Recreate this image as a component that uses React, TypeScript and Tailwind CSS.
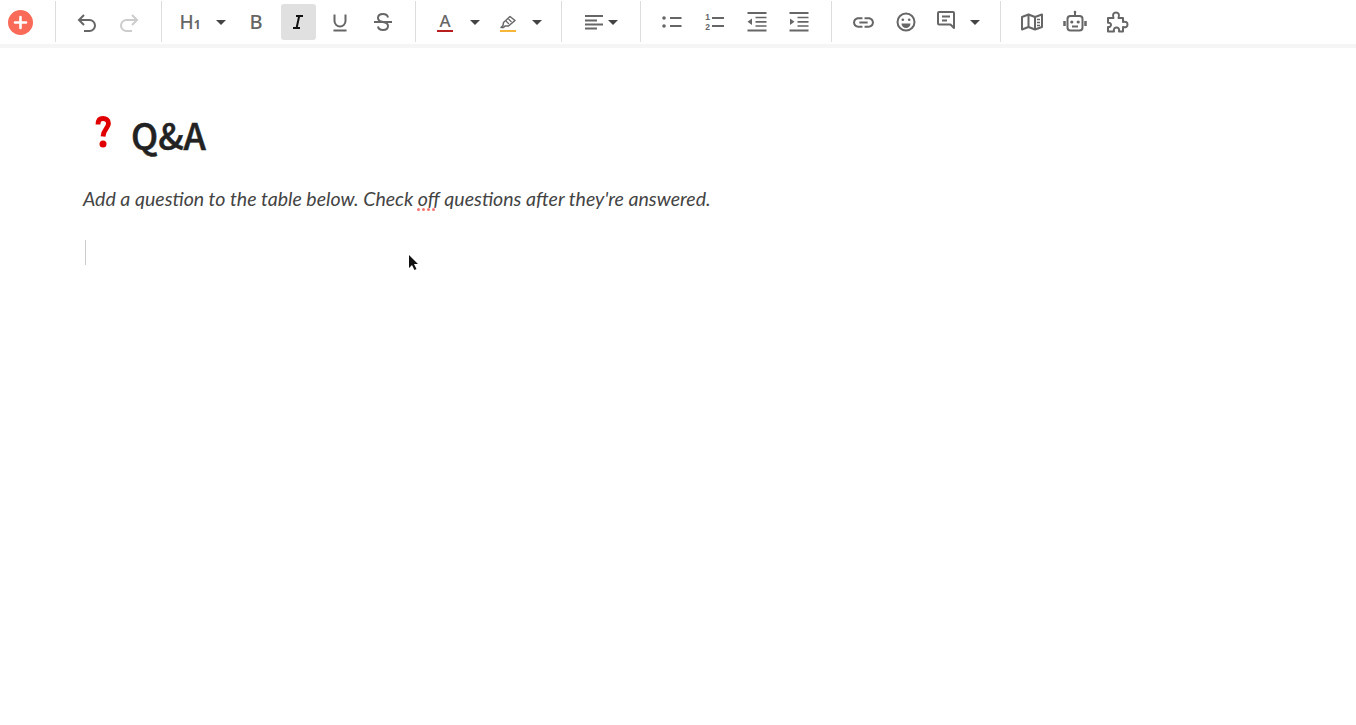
import type { ReactNode } from "react";
import { MdLink } from "react-icons/md";

function Caret({ w = "w-[20px]" }: { w?: string }) {
  return (
    <div className={`${w} h-full flex items-center justify-center shrink-0`}>
      <div className="w-0 h-0 border-x-[5px] border-x-transparent border-t-[5px] border-t-[#444]" />
    </div>
  );
}

function Btn({ children, w = "w-[42px]" }: { children: ReactNode; w?: string }) {
  return <div className={`${w} h-full flex items-center justify-center text-[#666] shrink-0`}>{children}</div>;
}

function Sep() {
  return <div className="w-px h-[41px] mt-[1px] self-start bg-[#ddd] shrink-0" />;
}

// 24px stroke icon, most of the toolbar glyphs
function Ico({ children, color = "#666", sw = 2 }: { children: ReactNode; color?: string; sw?: number }) {
  return (
    <svg width="24" height="24" viewBox="0 0 24 24" fill="none" stroke={color} strokeWidth={sw}>
      {children}
    </svg>
  );
}

export default function App() {
  return (
    <div className="w-[1356px] h-[725px] bg-white overflow-hidden relative font-['Lato',sans-serif]">
      <div className="h-[44px] flex items-center bg-white">
        <div className="w-[55px] h-full flex items-center pl-[8px]">
          <div className="w-[25px] h-[25px] rounded-full bg-[#f96b58] flex items-center justify-center">
            <svg width="15" height="15" viewBox="0 0 15 15">
              <path d="M7.5 2v11M2 7.5h11" stroke="#fff" strokeWidth="2.6" strokeLinecap="round" />
            </svg>
          </div>
        </div>
        <Sep />
        <div className="w-[105px] h-full flex items-center pl-[10px]">
          <Btn>
            <Ico>
              <path d="M9 5 4 10l5 5M4 10h10.5a5.5 5.5 0 0 1 0 11H9" />
            </Ico>
          </Btn>
          <Btn>
            <Ico color="#ccc">
              <path d="M15 5l5 5-5 5M20 10H9.5a5.5 5.5 0 0 0 0 11H15" />
            </Ico>
          </Btn>
        </div>
        <Sep />
        <div className="w-[253px] h-full flex items-center pl-[7px]">
          <Btn>
            <span className="font-['Noto_Sans',sans-serif] font-medium text-[19px] leading-none">H</span>
            <span className="font-['Noto_Sans',sans-serif] text-[12px] leading-none mt-[5px] font-bold">1</span>
          </Btn>
          <Caret />
          <div className="w-[4px]" />
          <Btn>
            <span className="font-['Noto_Sans',sans-serif] font-medium text-[20px] leading-none">B</span>
          </Btn>
          <div className="w-[42px] h-full flex items-center justify-center shrink-0">
            <div className="w-[35px] h-[36px] rounded-[3px] bg-[#e0e0e0] flex items-center justify-center">
              <svg width="12" height="14" viewBox="0 0 12 14" fill="none" stroke="#111" strokeWidth="2">
                <path d="M4 1h7M1 13h7M7.2 1 4.6 13" />
              </svg>
            </div>
          </div>
          <Btn>
            <Ico>
              <path d="M6.500 4.500v6.500a5.500 5.500 0 0 0 11 0V4.500M5.500 20.500h13" />
            </Ico>
          </Btn>
          <Btn w="w-[43px]">
            <Ico>
              <path d="M17 7.500C16.500 5 14.500 4 12 4 9 4 7 5.500 7 8c0 2.500 2 3.500 5 4 3 .5 5 1.500 5 4 0 2.500-2 4-5 4-2.500 0-4.500-1-5-3.500" />
              <path d="M3 12h18" />
            </Ico>
          </Btn>
        </div>
        <Sep />
        <div className="w-[145px] h-full flex items-center pl-[7px]">
          <Btn w="w-[44px]">
            <div className="flex flex-col items-center w-[16px] h-[20px] justify-end">
              <span className="font-['Noto_Sans',sans-serif] font-medium text-[17px] leading-[16px] text-[#666]">A</span>
              <div className="w-[16px] h-[2px] mt-[1px] bg-[#b81e1e]" />
            </div>
          </Btn>
          <Caret w="w-[16px]" />
          <Btn w="w-[50px]">
            <div className="flex flex-col items-center w-[16px] h-[20px] justify-end">
              <svg width="16" height="14" viewBox="0 0 16 14" fill="none" stroke="#666" strokeWidth="1.5" strokeLinejoin="round">
                <path d="M1 12.500 3 10.500 3.500 7.500 10 1.500 15 5.500 8.500 11H5L3.500 12.500Z" />
                <path d="M6 6l3 3M8.500 4l3 3" strokeWidth="1.200" />
              </svg>
              <div className="w-[16px] h-[2px] mt-[1px] bg-[#f5b63a]" />
            </div>
          </Btn>
          <Caret w="w-[8px]" />
        </div>
        <Sep />
        <div className="w-[78px] h-full flex items-center pl-[23px]">
          <svg width="18" height="16" viewBox="0 0 18 16" fill="none" stroke="#666" strokeWidth="2">
            <path d="M0 2h18M0 6.500h12M0 10.500h18M0 14.500h12" />
          </svg>
          <Caret w="w-[20px]" />
        </div>
        <Sep />
        <div className="w-[190px] h-full flex items-center pl-[10px]">
          <Btn>
            <Ico>
              <circle cx="4" cy="8" r="1.800" fill="#666" stroke="none" />
              <circle cx="4" cy="16" r="1.800" fill="#666" stroke="none" />
              <path d="M10 8h11.500M10 16h11.500" />
            </Ico>
          </Btn>
          <Btn>
            <div className="flex items-center gap-[2px] ml-[1px]">
              <div className="flex flex-col items-center gap-[1px] font-['Liberation_Sans',sans-serif] font-bold text-[8.5px] leading-[9px]">
                <span>1</span>
                <span>2</span>
              </div>
              <svg width="12" height="16" viewBox="0 0 12 16" fill="none" stroke="#666" strokeWidth="2">
                <path d="M0 4h12M0 12h12" />
              </svg>
            </div>
          </Btn>
          <Btn w="w-[43px]">
            <Ico>
              <path d="M2.500 3h19M2.500 20.500h19" />
              <path d="M10.500 7.500h11M10.500 11.800h11M10.500 16h11" strokeWidth="1.700" />
              <path d="M7 8.500v6.500l-4.500-3.250Z" fill="#666" stroke="none" />
            </Ico>
          </Btn>
          <Btn>
            <Ico>
              <path d="M2.500 3h19M2.500 20.500h19" />
              <path d="M10.500 7.500h11M10.500 11.800h11M10.500 16h11" strokeWidth="1.700" />
              <path d="M3 8.500v6.500l4.500-3.250Z" fill="#666" stroke="none" />
            </Ico>
          </Btn>
        </div>
        <Sep />
        <div className="w-[168px] h-full flex items-center pl-[10px]">
          <Btn><MdLink size={25} /></Btn>
          <Btn w="w-[43px]">
            <Ico>
              <circle cx="12" cy="12" r="8.500" />
              <circle cx="8.800" cy="9.800" r="1.300" fill="#666" stroke="none" />
              <circle cx="15.200" cy="9.800" r="1.300" fill="#666" stroke="none" />
              <path d="M7.500 13.500h9a4.500 4.500 0 0 1-9 0Z" fill="#666" stroke="none" />
            </Ico>
          </Btn>
          <Btn w="w-[37px]">
            <span className="-mt-[4px]">
              <svg width="20" height="20" viewBox="0 0 20 20" fill="none" stroke="#666" strokeWidth="2" strokeLinejoin="round">
                <path d="M3 2h14a1 1 0 0 1 1 1v15l-3.500-3.500H3a1 1 0 0 1-1-1V3a1 1 0 0 1 1-1Z" />
                <path d="M6 6.500h8M6 10.500h5" />
              </svg>
            </span>
          </Btn>
          <Caret w="w-[22px]" />
        </div>
        <Sep />
        <div className="h-full flex items-center pl-[10px]">
          <Btn w="w-[42.5px]">
            <svg width="22" height="18" viewBox="0 0 22 18" fill="none" stroke="#666" strokeWidth="2" strokeLinejoin="round">
              <path d="M1 4 7.500 1.500 14 4 21 1.500V14L14 16.500 7.500 14 1 16.500Z" />
              <path d="M7.500 1.500V14M14 4v12.500" />
              <path d="M16 6.500h3M16 9.500h3M16 12.500h3" strokeWidth="1.500" />
            </svg>
          </Btn>
          <Btn w="w-[42.5px]">
            <Ico>
              <path d="M12 1.500v4" />
              <circle cx="12" cy="2" r="1.300" fill="#666" stroke="none" />
              <rect x="4.500" y="6" width="15" height="14.500" rx="3" />
              <path d="M1.500 11v5M22.500 11v5" strokeWidth="2.500" />
              <circle cx="8.800" cy="12" r="1.600" fill="#666" stroke="none" />
              <circle cx="15.200" cy="12" r="1.600" fill="#666" stroke="none" />
              <path d="M9 16.500h6" />
            </Ico>
          </Btn>
          <Btn w="w-[42.5px]">
            <Ico>
              <path d="M3 8h5.500C7 4 9 2.500 11 2.500S15 4 13.500 8H18v4c3-1 4.500.5 4.500 2.500S21 18 18 17v4.500h-4c.8-3-1-4-2.500-4s-3.300 1-2.500 4H3V17c2 .5 3-1 3-2.200S5 12.300 3 12.800Z" strokeLinejoin="round" />
            </Ico>
          </Btn>
        </div>
      </div>
      <div className="h-[4px] bg-[#f5f5f5]" />

      <div className="pl-[83px] pt-[62px]">
        <div className="flex items-center h-[48px]">
          <svg width="18" height="36" viewBox="0 0 18 36" className="ml-[11px] -mt-[3px]">
            <path d="M4 9.500C4 5 6 3.500 9 3.500S14.500 5 14.500 8.500c0 4.500-5 5.500-5.500 13" fill="none" stroke="#e00000" strokeWidth="4.800" />
            <circle cx="9" cy="29" r="3.500" fill="#e00000" />
          </svg>
          <h1 className="ml-[19px] font-['Noto_Sans_CJK_SC',sans-serif] font-medium [-webkit-text-stroke:0.5px_#222] text-[36px] leading-none text-[#222] -mt-[1px]">Q&amp;A</h1>
        </div>
        <p className="mt-[28px] italic text-[19.56px] leading-[26px] text-[#444]">
          Add a question to the table below. Check{" "}
          <span className="relative">
            off
            <span className="absolute -left-[1px] -bottom-[1px] flex gap-[2px]">
              <span className="size-[3px] rounded-full bg-[#f87171]" />
              <span className="size-[3px] rounded-full bg-[#f87171]" />
              <span className="size-[3px] rounded-full bg-[#f87171]" />
              <span className="size-[3px] rounded-full bg-[#f87171]" />
            </span>
          </span>{" "}
          questions after they're answered.
        </p>
        <div className="ml-[1.500px] mt-[28px] w-px h-[25px] bg-[#ccc]" />
      </div>

      <svg width="12" height="18" viewBox="0 0 12 18" className="absolute left-[408px] top-[254px]">
        <path d="M1 1v13l3-3 2.500 5 2-1-2.500-5H10Z" fill="#111" />
      </svg>
    </div>
  );
}
